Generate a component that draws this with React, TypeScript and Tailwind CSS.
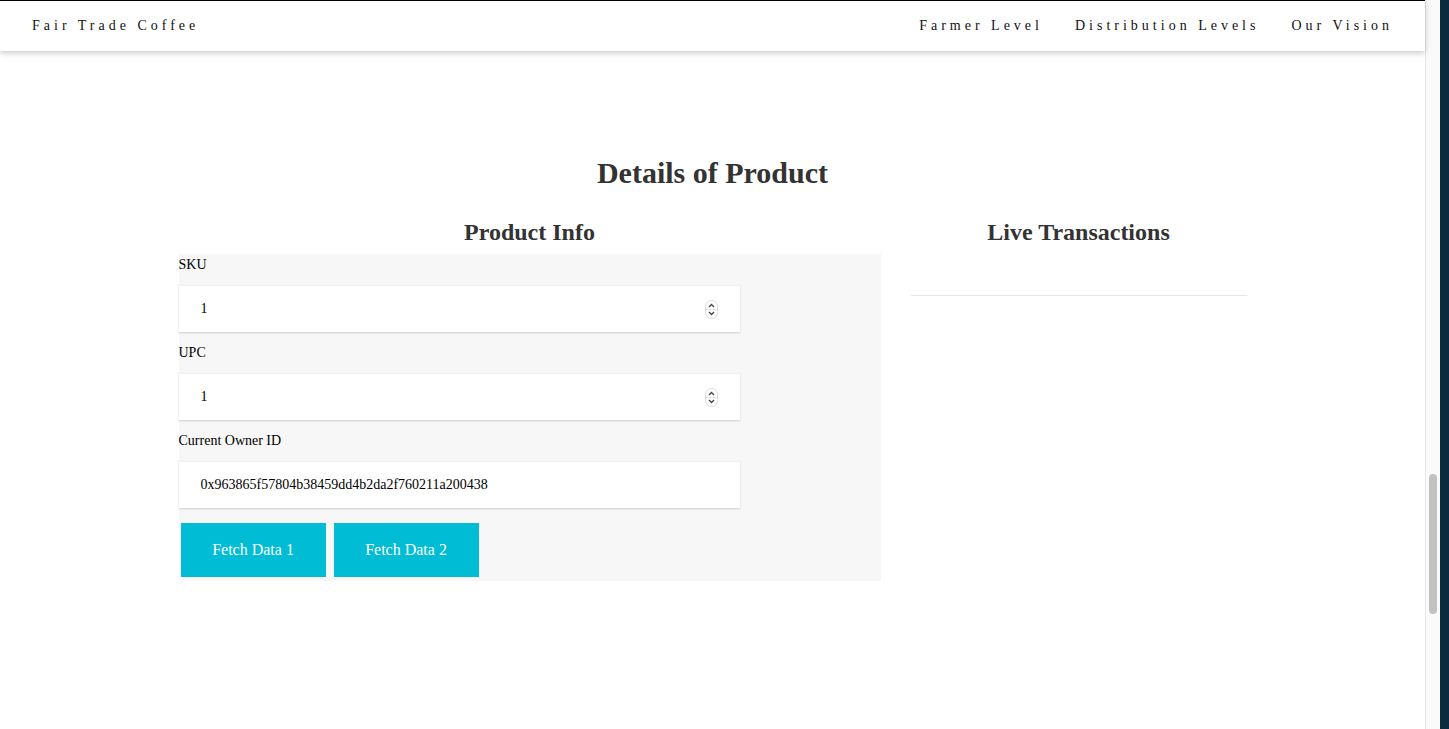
import React from 'react';

const NAV = ['Farmer Level', 'Distribution Levels', 'Our Vision'];

const FIELDS = [
  { label: 'SKU', value: '1', spinner: true },
  { label: 'UPC', value: '1', spinner: true },
  { label: 'Current Owner ID', value: '0x963865f57804b38459dd4b2da2f760211a200438', spinner: false },
];

const Spinner: React.FC = () => (
  <svg
    width="13"
    height="19"
    viewBox="0 0 13 19"
    className="absolute right-[22px] top-[14px]"
  >
    <rect x="0.5" y="0.5" width="12" height="18" rx="6" fill="#fff" stroke="#dcdcdc" />
    <line x1="1" y1="9.5" x2="12" y2="9.5" stroke="#e2e2e2" />
    <path d="M4 7 L6.5 4.5 L9 7" fill="none" stroke="#444" strokeWidth="1.3" />
    <path d="M4 12 L6.5 14.5 L9 12" fill="none" stroke="#444" strokeWidth="1.3" />
  </svg>
);

const Header: React.FC = () => (
  <header className="relative z-10 h-[51px] bg-white border-t border-black shadow-[0_2px_6px_rgba(0,0,0,0.22)] flex items-start justify-between px-[32px] pt-[15px] text-[14px] leading-[20px] tracking-[4px] text-[#111]">
    <span>Fair Trade Coffee</span>
    <nav className="flex gap-[32px]">
      {NAV.map((item) => (
        <a key={item} href="#" className="text-[#111]">
          {item}
        </a>
      ))}
    </nav>
  </header>
);

export default function App() {
  return (
    <div className="flex h-[729px] w-full overflow-hidden bg-white font-['Liberation_Serif',serif]">
      <div className="flex-1 min-w-0">
        <Header />

        <main className="w-[1068px] mx-auto pt-[104px]">
          <h2 className="text-center text-[30px] font-bold leading-[36px] text-[#333]">
            Details of Product
          </h2>

          <div className="grid grid-cols-[702px_336px] gap-x-[30px] mt-[27px]">
            {/* Product info */}
            <div>
              <h3 className="text-center text-[24px] font-bold leading-[29px] text-[#333]">
                Product Info
              </h3>
              <div className="mt-[7px] bg-[#f7f7f7] pb-[4px]">
                {FIELDS.map((f) => (
                  <div key={f.label}>
                    <label className="block text-[14px] leading-[21px] mb-[10px] text-black">
                      {f.label}
                    </label>
                    <div className="relative w-[561px] h-[47px] mb-[10px] bg-white border-t border-[#efefef] shadow-[0_1px_2px_rgba(0,0,0,0.16)]">
                      <input
                        readOnly
                        defaultValue={f.value}
                        className="w-full h-full bg-transparent pl-[22px] text-[14px] text-black outline-none"
                      />
                      {f.spinner && <Spinner />}
                    </div>
                  </div>
                ))}
                <div className="flex gap-[8px] ml-[2px] mt-[15px]">
                  <button className="w-[145px] h-[54px] bg-[#00bcd4] text-white text-[16px]">
                    Fetch Data 1
                  </button>
                  <button className="w-[145px] h-[54px] bg-[#00bcd4] text-white text-[16px]">
                    Fetch Data 2
                  </button>
                </div>
              </div>
            </div>

            {/* Live transactions */}
            <div>
              <h3 className="text-center text-[24px] font-bold leading-[29px] text-[#333]">
                Live Transactions
              </h3>
              <hr className="mt-[48px] border-0 border-t border-[#e8e8e8]" />
            </div>
          </div>
        </main>
      </div>

      {/* scrollbar */}
      <div className="w-[15px] shrink-0 bg-[#fafafa] border-l border-[#e6e6e6] pt-[474px] pl-[3px]">
        <div className="w-[8px] h-[140px] rounded-full bg-[#c1c1c1]" />
      </div>
      <div className="w-[9px] shrink-0 bg-[#0c2a3d]" />
    </div>
  );
}
